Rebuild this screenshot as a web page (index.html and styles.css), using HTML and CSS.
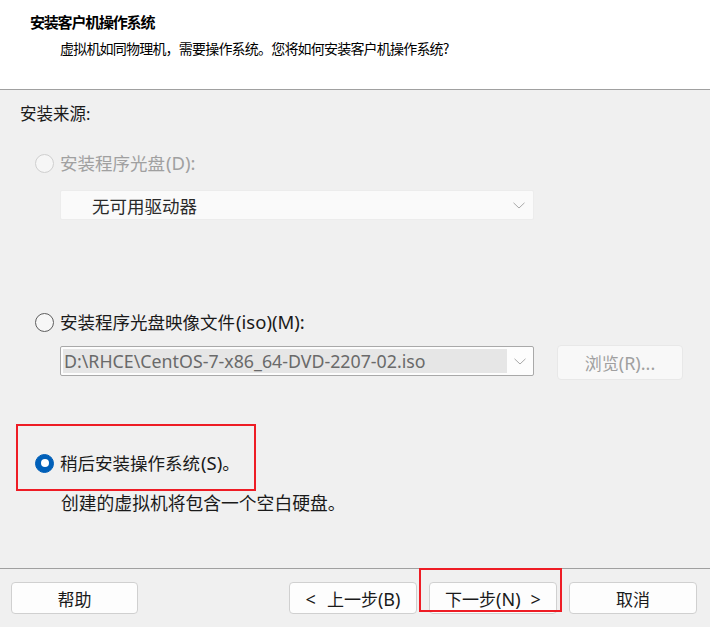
FILE: index.html
```html
<!DOCTYPE html>
<html lang="zh-CN">
<head>
<meta charset="utf-8">
<title>安装客户机操作系统</title>
<link rel="stylesheet" href="styles.css">
</head>
<body>
<div class="window">
  <header class="head">
    <h1 class="title">安装客户机操作系统</h1>
    <p class="subtitle">虚拟机如同物理机，需要操作系统。您将如何安装客户机操作系统?</p>
  </header>
  <main class="content">
    <div class="section-label">安装来源:</div>

    <div class="option disabled">
      <span class="radio"></span>
      <span class="label">安装程序光盘<span class="lat">(D):</span></span>
    </div>
    <div class="select select-disc">
      <span class="select-text">无可用驱动器</span>
      <svg class="chevron" width="12" height="7" viewBox="0 0 12 7"><path d="M0.5 0.8 L6 6 L11.5 0.8" fill="none" stroke="#a8a8a8" stroke-width="1"/></svg>
    </div>

    <div class="option option-iso">
      <span class="radio"></span>
      <span class="label">安装程序光盘映像文件<span class="lat">(iso)(M):</span></span>
    </div>
    <div class="iso-row">
      <div class="select select-iso">
        <span class="selection">D:\RHCE\CentOS-7-x86_64-DVD-2207-02.iso</span>
        <svg class="chevron" width="12" height="7" viewBox="0 0 12 7"><path d="M0.5 0.8 L6 6 L11.5 0.8" fill="none" stroke="#a8a8a8" stroke-width="1"/></svg>
      </div>
      <button class="btn btn-browse" disabled>浏览<span class="lat">(R)...</span></button>
    </div>

    <div class="option option-later">
      <span class="radio checked"></span>
      <span class="label">稍后安装操作系统<span class="lat">(S)</span>。</span>
    </div>
    <div class="desc">创建的虚拟机将包含一个空白硬盘。</div>

    <div class="annot annot-later"></div>
  </main>
  <footer class="foot">
    <button class="btn">帮助</button>
    <div class="spacer"></div>
    <button class="btn"><span class="lat arrow-l">&lt;</span>上一步<span class="lat">(B)</span></button>
    <button class="btn">下一步<span class="lat">(N)</span><span class="lat arrow-r">&gt;</span></button>
    <button class="btn">取消</button>
    <div class="annot annot-next"></div>
  </footer>
</div>
</body>
</html>
```

FILE: styles.css
```css
* { box-sizing: border-box; }

html, body {
  margin: 0;
  padding: 0;
  width: 710px;
  height: 627px;
  overflow: hidden;
  background: #f0f0f0;
}

body {
  font-family: "Noto Sans", "Noto Sans CJK SC", sans-serif;
  color: #1a1a1a;
}

.window {
  width: 710px;
  height: 627px;
  display: flex;
  flex-direction: column;
}

.head {
  height: 90px;
  background: #ffffff;
  border-bottom: 1px solid #a0a0a0;
  padding: 11px 0 0 30px;
}

.title {
  margin: 0;
  font-family: "Noto Sans CJK SC", sans-serif;
  font-size: 15px;
  letter-spacing: -1.2px;
  line-height: 21px;
  font-weight: 700;
  color: #000;
}

.subtitle {
  margin: 6px 0 0 30px;
  font-family: "Noto Sans CJK SC", sans-serif;
  font-size: 14px;
  letter-spacing: -0.8px;
  line-height: 20px;
  color: #000;
}

.lat {
  font-family: "Noto Sans", sans-serif;
  font-size: 18px;
}

.content {
  position: relative;
  height: 479px;
  border-bottom: 1px solid #a0a0a0;
  padding: 12px 0 0 20px;
  display: flex;
  flex-direction: column;
  align-items: flex-start;
  font-size: 17.5px;
}

.section-label {
  font-size: 16.5px;
  line-height: 24px;
  color: #1a1a1a;
}

.option {
  display: flex;
  align-items: center;
  gap: 6px;
  margin-top: 25px;
  padding-left: 15px;
  height: 24px;
  line-height: 24px;
}

.option .label { font-size: 17.5px; white-space: nowrap; }
.option .lat { margin-left: 1px; font-size: 18.5px; }

.radio {
  width: 19px;
  height: 19px;
  border-radius: 50%;
  border: 1px solid #5e5e5e;
  background: #f7f7f7;
  flex: none;
  display: flex;
  align-items: center;
  justify-content: center;
}

.option.disabled { color: #a0a0a0; }
.option.disabled .radio {
  border-color: #cfcfcf;
  background: #f6f6f6;
}

.radio.checked {
  background: #005fb8;
  border-color: #005fb8;
}
.radio.checked::after {
  content: "";
  width: 8px;
  height: 8px;
  border-radius: 50%;
  background: #ffffff;
}

.select {
  width: 474px;
  height: 30px;
  margin-left: 40px;
  display: flex;
  align-items: center;
  border-radius: 2px;
}

.select .chevron {
  flex: none;
  margin-left: auto;
  margin-right: 8px;
}

.select-disc {
  margin-top: 15px;
  background: #fafafa;
  border: 1px solid #ececec;
  padding-left: 31px;
}
.select-text {
  font-size: 17.5px;
  color: #2a2a2a;
}

.option-iso { margin-top: 90px; }

.iso-row {
  display: flex;
  align-items: flex-start;
  gap: 23px;
  margin-top: 12px;
}

.select-iso {
  margin-top: 0;
  background: #fdfdfd;
  border: 1px solid #a9a9a9;
  padding: 2px 0 2px 2px;
}
.selection {
  width: 444px;
  height: 24px;
  background: #e6e6e6;
  color: #6a6a6a;
  font-size: 17.8px;
  line-height: 24px;
  padding-left: 1px;
  white-space: nowrap;
  overflow: hidden;
}
.select-iso .chevron { margin-right: 7px; }

.btn {
  width: 128px;
  height: 32px;
  border: 1px solid #d0d0d0;
  border-radius: 4px;
  background: #fdfdfd;
  font-family: "Noto Sans CJK SC", sans-serif;
  font-size: 17px;
  color: #1a1a1a;
  padding: 0;
  flex: none;
  white-space: nowrap;
}
.btn .lat { font-size: 18px; }
.arrow-l { margin-right: 11px; }
.arrow-r { margin-left: 10px; }

.btn-browse {
  width: 126px;
  height: 35px;
  margin-top: -1px;
  background: #f8f8f8;
  border-color: #e8e8e8;
  color: #a0a0a0;
}

.option-later { margin-top: 71px; }

.desc {
  margin-top: 16px;
  margin-left: 41px;
  font-size: 17.8px;
  line-height: 24px;
  color: #1a1a1a;
}

.foot {
  position: relative;
  flex: 1;
  display: flex;
  align-items: flex-start;
  gap: 12px;
  padding: 13px 13px 0 11px;
}
.foot .btn:first-child { width: 127px; }
.spacer { flex: 1; }

.annot {
  position: absolute;
  border: 2px solid #ee1c25;
  pointer-events: none;
}
.annot-later {
  left: 16px;
  top: 334px;
  width: 240px;
  height: 67px;
}
.annot-next {
  left: 419px;
  top: -1px;
  width: 143px;
  height: 44px;
}
```
